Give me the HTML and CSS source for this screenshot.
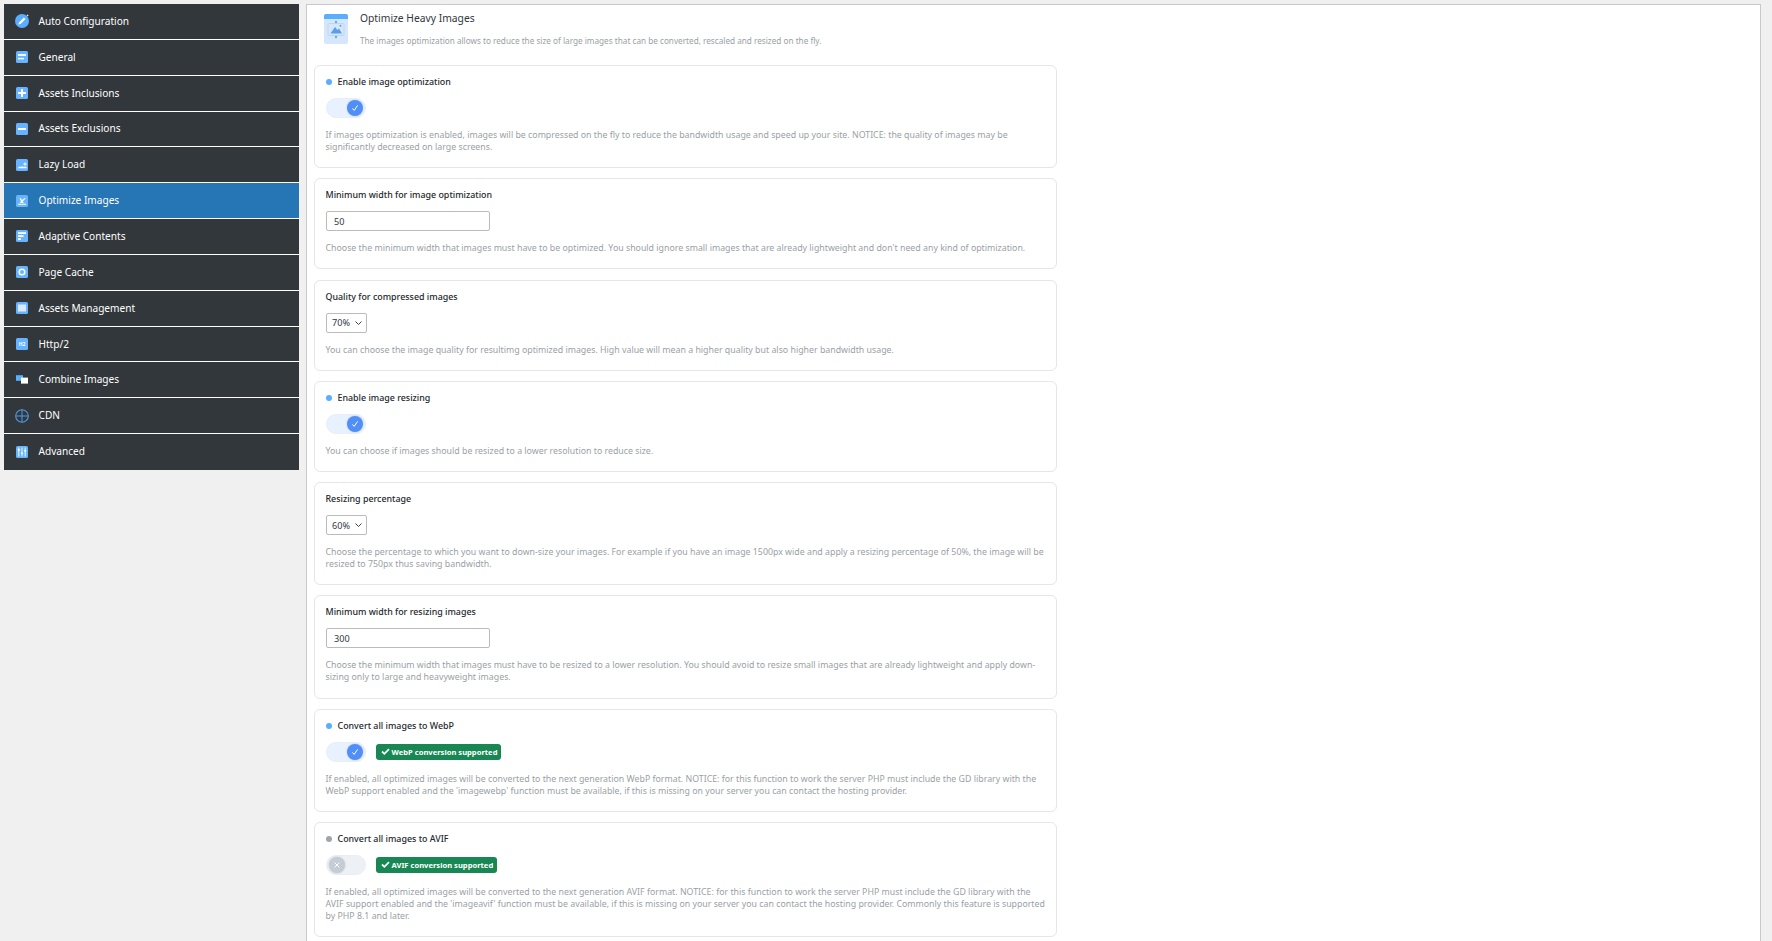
FILE: index.html
```html
<!DOCTYPE html>
<html>

<head>
    <meta charset="UTF-8">
    <title>Optimize Images</title>
    <link rel="stylesheet" href="styles.css">
</head>

<body>
    <div class="wrap">
        <div class="menu">
            <div class="menu-item">
                <svg class="menu-icon round" viewBox="0 0 14 14"><circle cx="7" cy="7" r="7" fill="#5aaeff"/><path d="M3.4 10.6 4 8.4 8.9 3.5 10.5 5.1 5.6 10Z" fill="#fff"/><path d="M12.6 0.2 13 1 13.8 1.4 13 1.8 12.6 2.6 12.2 1.8 11.4 1.4 12.2 1Z" fill="#fff"/></svg>
                <span>Auto Configuration</span>
            </div>
            <div class="menu-item">
                <svg class="menu-icon" viewBox="0 0 12 12"><rect width="12" height="12" rx="1.5" fill="#66b3ff"/><rect x="2" y="3" width="8" height="2" fill="#fff" opacity=".9"/><rect x="2" y="6.8" width="6" height="1.6" fill="#fff" opacity=".9"/></svg>
                <span>General</span>
            </div>
            <div class="menu-item">
                <svg class="menu-icon" viewBox="0 0 12 12"><rect width="12" height="12" rx="1.5" fill="#66b3ff"/><path d="M5 2h2v3h3v2H7v3H5V7H2V5h3Z" fill="#fff"/></svg>
                <span>Assets Inclusions</span>
            </div>
            <div class="menu-item">
                <svg class="menu-icon" viewBox="0 0 12 12"><rect width="12" height="12" rx="1.5" fill="#66b3ff"/><rect x="2" y="5" width="8" height="2" fill="#fff"/></svg>
                <span>Assets Exclusions</span>
            </div>
            <div class="menu-item">
                <svg class="menu-icon" viewBox="0 0 12 12"><rect width="12" height="12" rx="1.5" fill="#66b3ff"/><path d="M1.5 9.3 3.5 7.4 4.8 8 5.8 7.2 7.4 7.8 10.5 7.8V9.3Z" fill="#fff"/><path d="M8.5 3.4h1v1.2h1.2v1H9.5v1.2h-1V5.6H7.3v-1h1.2Z" fill="#fff"/></svg>
                <span>Lazy Load</span>
            </div>
            <div class="menu-item active">
                <svg class="menu-icon" viewBox="0 0 12 12"><rect width="12" height="12" rx="1.5" fill="#66b3ff"/><path d="M2 8.8H10V9.8H2ZM3.4 3.2H4.9L5.9 5 9 3 9.6 3.6 6.6 6.4 8 8H3.8L5 6.2Z" fill="#fff"/></svg>
                <span>Optimize Images</span>
            </div>
            <div class="menu-item">
                <svg class="menu-icon" viewBox="0 0 12 12"><rect width="12" height="12" rx="1.5" fill="#66b3ff"/><rect x="2" y="2.2" width="8" height="1.8" fill="#fff"/><rect x="2" y="5.2" width="5.5" height="1.8" fill="#fff"/><rect x="2" y="8.2" width="3" height="1.8" fill="#fff"/></svg>
                <span>Adaptive Contents</span>
            </div>
            <div class="menu-item">
                <svg class="menu-icon" viewBox="0 0 12 12"><rect width="12" height="12" rx="1.5" fill="#66b3ff"/><circle cx="6" cy="6" r="2.8" fill="none" stroke="#fff" stroke-width="1.6"/></svg>
                <span>Page Cache</span>
            </div>
            <div class="menu-item">
                <svg class="menu-icon" viewBox="0 0 12 12"><rect width="12" height="12" rx="1.5" fill="#66b3ff"/><rect x="2" y="2.5" width="8" height="7" fill="#dbe9fb"/></svg>
                <span>Assets Management</span>
            </div>
            <div class="menu-item">
                <svg class="menu-icon" viewBox="0 0 12 12"><rect width="12" height="12" rx="1.5" fill="#66b3ff"/><text x="6" y="8" class="h2-text">H2</text></svg>
                <span>Http/2</span>
            </div>
            <div class="menu-item">
                <svg class="menu-icon" viewBox="0 0 12 12"><rect y="1.2" width="7" height="5.6" fill="#5aaeff"/><rect x="5" y="3.6" width="7" height="6" fill="#fff"/></svg>
                <span>Combine Images</span>
            </div>
            <div class="menu-item">
                <svg class="menu-icon round" viewBox="0 0 14 14"><circle cx="7" cy="7" r="6.3" fill="none" stroke="#4f9be6" stroke-width="1.1"/><path d="M7 .7V13.3M.7 7H13.3" stroke="#4f9be6" stroke-width="1"/></svg>
                <span>CDN</span>
            </div>
            <div class="menu-item">
                <svg class="menu-icon" viewBox="0 0 12 12"><rect width="12" height="12" rx="1.5" fill="#66b3ff"/><path d="M2.8 1.5v9M6 1.5v9M9.2 1.5v9" stroke="#fff" stroke-width=".9"/><rect x="1.8" y="3" width="2" height="1.6" fill="#fff"/><rect x="5" y="6.6" width="2" height="1.6" fill="#fff"/><rect x="8.2" y="4" width="2" height="1.6" fill="#fff"/></svg>
                <span>Advanced</span>
            </div>
        </div>

        <div class="panel">
            <div class="panel-head">
                <svg class="head-icon" viewBox="0 0 24 30"><rect width="24" height="30" rx="2" fill="#d6e7fb"/><path d="M0 5V2a2 2 0 0 1 2-2h20a2 2 0 0 1 2 2v3Z" fill="#5aaeff"/><rect x="4" y="9.5" width="16" height="12" rx="1" fill="none" stroke="#bcd7f5" stroke-width="1"/><path d="M6.5 19.5 11 13 13.5 16 15 14.5 18 19.5Z" fill="#5a9fe8"/><path d="M12 6.5 13.3 8 12 9.5 10.7 8ZM12 21.5 13.3 23 12 24.5 10.7 23Z" fill="#5a9fe8"/><circle cx="16.5" cy="11.8" r="1" fill="#5a9fe8"/></svg>
                <div class="head-text">
                    <div class="panel-title">Optimize Heavy Images</div>
                    <div class="panel-desc">The images optimization allows to reduce the size of large images that can be converted, rescaled and resized on the fly.</div>
                </div>
            </div>

            <div class="card">
                <div class="label dotted">Enable image optimization</div>
                <div class="control">
                    <div class="toggle on"><div class="knob"><svg viewBox="0 0 10 10"><path d="M2.4 5.4 4.2 7.4 7.6 2.4" fill="none" stroke="#fff" stroke-width="1"/></svg></div></div>
                </div>
                <div class="desc">If images optimization is enabled, images will be compressed on the fly to reduce the bandwidth usage and speed up your site. NOTICE: the quality of images may be significantly decreased on large screens.</div>
            </div>

            <div class="card">
                <div class="label">Minimum width for image optimization</div>
                <div class="control">
                    <input class="text-input" type="text" value="50">
                </div>
                <div class="desc">Choose the minimum width that images must have to be optimized. You should ignore small images that are already lightweight and don't need any kind of optimization.</div>
            </div>

            <div class="card">
                <div class="label">Quality for compressed images</div>
                <div class="control">
                    <div class="select">70%<svg viewBox="0 0 7 4"><path d="M.5 .5 3.5 3.5 6.5 .5" fill="none" stroke="#3c434a" stroke-width="1"/></svg></div>
                </div>
                <div class="desc">You can choose the image quality for resultimg optimized images. High value will mean a higher quality but also higher bandwidth usage.</div>
            </div>

            <div class="card">
                <div class="label dotted">Enable image resizing</div>
                <div class="control">
                    <div class="toggle on"><div class="knob"><svg viewBox="0 0 10 10"><path d="M2.4 5.4 4.2 7.4 7.6 2.4" fill="none" stroke="#fff" stroke-width="1"/></svg></div></div>
                </div>
                <div class="desc">You can choose if images should be resized to a lower resolution to reduce size.</div>
            </div>

            <div class="card">
                <div class="label">Resizing percentage</div>
                <div class="control">
                    <div class="select">60%<svg viewBox="0 0 7 4"><path d="M.5 .5 3.5 3.5 6.5 .5" fill="none" stroke="#3c434a" stroke-width="1"/></svg></div>
                </div>
                <div class="desc">Choose the percentage to which you want to down-size your images. For example if you have an image 1500px wide and apply a resizing percentage of 50%, the image will be resized to 750px thus saving bandwidth.</div>
            </div>

            <div class="card">
                <div class="label">Minimum width for resizing images</div>
                <div class="control">
                    <input class="text-input" type="text" value="300">
                </div>
                <div class="desc">Choose the minimum width that images must have to be resized to a lower resolution. You should avoid to resize small images that are already lightweight and apply down-sizing only to large and heavyweight images.</div>
            </div>

            <div class="card">
                <div class="label dotted">Convert all images to WebP</div>
                <div class="control">
                    <div class="toggle on"><div class="knob"><svg viewBox="0 0 10 10"><path d="M2.4 5.4 4.2 7.4 7.6 2.4" fill="none" stroke="#fff" stroke-width="1"/></svg></div></div>
                    <div class="badge"><svg viewBox="0 0 10 8"><path d="M1 4 3.7 6.6 9 1.2" fill="none" stroke="#fff" stroke-width="2"/></svg>WebP conversion supported</div>
                </div>
                <div class="desc">If enabled, all optimized images will be converted to the next generation WebP format. NOTICE: for this function to work the server PHP must include the GD library with the WebP support enabled and the 'imagewebp' function must be available, if this is missing on your server you can contact the hosting provider.</div>
            </div>

            <div class="card">
                <div class="label dotted off">Convert all images to AVIF</div>
                <div class="control">
                    <div class="toggle"><div class="knob"><svg viewBox="0 0 10 10"><path d="M2.6 2.6 7.4 7.4M7.4 2.6 2.6 7.4" fill="none" stroke="#fff" stroke-width="1"/></svg></div></div>
                    <div class="badge"><svg viewBox="0 0 10 8"><path d="M1 4 3.7 6.6 9 1.2" fill="none" stroke="#fff" stroke-width="2"/></svg>AVIF conversion supported</div>
                </div>
                <div class="desc">If enabled, all optimized images will be converted to the next generation AVIF format. NOTICE: for this function to work the server PHP must include the GD library with the AVIF support enabled and the 'imageavif' function must be available, if this is missing on your server you can contact the hosting provider. Commonly this feature is supported by PHP 8.1 and later.</div>
            </div>
        </div>
    </div>
</body>

</html>
```

FILE: styles.css
```css
html,
body {
    height: 100%;
    overflow: hidden;
}

body {
    margin: 0;
    background: #f0f0f1;
    font-family: "Noto Sans", "Open Sans", sans-serif;
}

.wrap {
    display: flex;
    align-items: flex-start;
    padding: 4px 11px 0 4px;
}

.menu {
    flex: 0 0 295px;
    margin-right: 7px;
}

.menu-item {
    display: flex;
    align-items: center;
    height: 34.85px;
    padding-left: 12px;
    background: #32373c;
    border-bottom: 1px solid #fff;
    color: #fff;
    font-size: 10.1px;
}

.menu-item:last-child {
    height: 34.85px;
    padding-bottom: 1px;
    border-bottom: 0;
}

.menu-item.active {
    background: #2675b4;
}

.menu-item span {
    padding-bottom: 1px;
}

.menu-icon {
    flex: none;
    width: 12px;
    height: 12px;
    margin-right: 10.5px;
}

.menu-icon.round {
    width: 14px;
    height: 14px;
    margin: 0 9.5px 0 -1px;
}

.h2-text {
    fill: #fff;
    font-size: 5px;
    font-weight: 700;
    text-anchor: middle;
}

.panel {
    flex: 1;
    min-width: 0;
    padding: 0 7px;
    background: #fff;
    border: 1px solid #c8c9cc;
    border-bottom: 0;
}

.panel-head {
    display: flex;
    height: 60px;
}

.head-icon {
    flex: none;
    width: 24px;
    height: 30px;
    margin: 9px 12px 0 10px;
}

.head-text {
    padding-top: 5px;
}

.panel-title {
    color: #32373c;
    font-size: 10.3px;
    line-height: 17px;
}

.panel-desc {
    margin-top: 8px;
    color: #9a9fa5;
    font-size: 8.2px;
    line-height: 12px;
}

.card {
    width: 743px;
    box-sizing: border-box;
    margin-bottom: 10.1px;
    padding: 9px 10.5px 14.2px;
    background: #fff;
    border: 1px solid #e6e6e8;
    border-radius: 6px;
}

.label {
    color: #23282d;
    font-size: 8.9px;
    font-weight: 500;
    line-height: 14px;
}

.label.dotted {
    display: flex;
    align-items: center;
}

.label.dotted::before {
    content: "";
    flex: none;
    width: 6px;
    height: 6px;
    margin-right: 6px;
    border-radius: 50%;
    background: #5aaeff;
}

.label.dotted.off::before {
    background: #a0a5aa;
}

.control {
    display: flex;
    align-items: center;
    height: 21px;
    margin: 8.5px 0 10.5px;
}

.desc {
    color: #9a9fa5;
    font-size: 8.8px;
    line-height: 12px;
}

.toggle {
    display: flex;
    align-items: center;
    box-sizing: border-box;
    width: 40px;
    height: 20px;
    padding: 0 2px;
    background: #edf1f5;
    border: 1px solid #e8eef5;
    border-radius: 10px;
}

.toggle.on {
    justify-content: flex-end;
    background: #e8f1ff;
}

.knob {
    display: flex;
    width: 16px;
    height: 16px;
    border-radius: 50%;
    background: #c5ccd6;
    box-shadow: 0 0 2px rgba(0, 0, 0, .2);
}

.toggle.on .knob {
    background: #4f8ff7;
}

.knob svg {
    width: 10px;
    height: 10px;
    margin: auto;
}

.text-input {
    box-sizing: border-box;
    width: 164px;
    height: 20px;
    margin-left: .5px;
    padding: 0 7px;
    border: 1px solid #bbb;
    border-radius: 2px;
    color: #32373c;
    font-family: inherit;
    font-size: 9.1px;
}

.select {
    display: flex;
    align-items: center;
    box-sizing: border-box;
    width: 41px;
    height: 20px;
    margin-left: .5px;
    padding: 0 4px 0 5px;
    border: 1px solid #bbb;
    border-radius: 2px;
    color: #32373c;
    font-size: 9.1px;
}

.select svg {
    flex: none;
    width: 7px;
    height: 4px;
    margin-left: 5px;
}

.badge {
    display: flex;
    align-items: center;
    height: 16px;
    margin-left: 10px;
    padding: 0 4px 0 5px;
    border-radius: 3px;
    background: #198754;
    color: #fff;
    font-size: 7.6px;
    font-weight: 700;
}

.badge svg {
    flex: none;
    width: 9px;
    height: 7px;
    margin-right: 2px;
}
```
